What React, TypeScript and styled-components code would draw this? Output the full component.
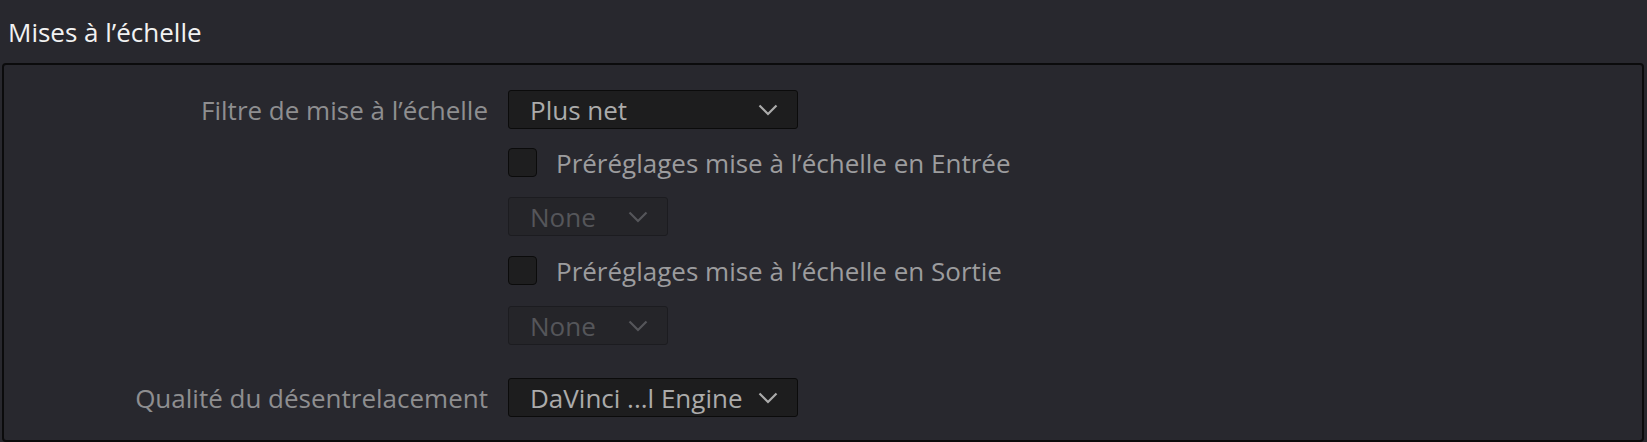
import React from "react";
import styled, { createGlobalStyle } from "styled-components";

const GlobalStyle = createGlobalStyle`
  html, body {
    margin: 0;
    padding: 0;
    background: #28282e;
  }
  body {
    font-family: "Open Sans", "Noto Sans", sans-serif;
    width: 1647px;
    height: 442px;
    overflow: hidden;
  }
`;

const Page = styled.div`
  width: 1647px;
  height: 442px;
  background: #28282e;
  display: flex;
  flex-direction: column;
  box-sizing: border-box;
  padding: 0 3px 0 2px;
`;

const Title = styled.h2`
  margin: 0;
  height: 63px;
  display: flex;
  align-items: center;
  padding: 0 0 0 6px;
  font-size: 26px;
  font-weight: 400;
  color: #f2f2f2;
`;

const Panel = styled.section`
  flex: 1;
  border: 2px solid #0b0b0c;
  border-radius: 4px;
  background: #28282e;
  padding: 25px 0 0 0;
  display: grid;
  grid-template-columns: 484px 1fr;
  column-gap: 20px;
  align-content: start;
`;

const Label = styled.div<{ $mt?: number }>`
  grid-column: 1;
  justify-self: end;
  align-self: center;
  margin-top: ${(p) => p.$mt ?? 0}px;
  font-size: 26px;
  color: #8e8e90;
  white-space: nowrap;
`;

const Cell = styled.div<{ $mt?: number }>`
  grid-column: 2;
  display: flex;
  align-items: center;
  height: 39px;
  margin-top: ${(p) => p.$mt ?? 0}px;
`;

const Select = styled.div<{ $width: number; $disabled?: boolean }>`
  box-sizing: border-box;
  width: ${(p) => p.$width}px;
  height: 39px;
  display: flex;
  align-items: center;
  justify-content: space-between;
  padding: 0 19px 0 21px;
  border-radius: 3px;
  border: 1px solid ${(p) => (p.$disabled ? "#1c1c20" : "#0b0b0b")};
  background: ${(p) => (p.$disabled ? "#252529" : "#1d1d1e")};
  color: ${(p) => (p.$disabled ? "#55565a" : "#ababab")};
  font-size: 26px;
  white-space: nowrap;
`;

const Chevron = styled.svg`
  flex: none;
  width: 20px;
  height: 12px;
`;

const CheckRow = styled.label`
  display: flex;
  align-items: center;
  gap: 19px;
  font-size: 26px;
  color: #9c9c9e;
  white-space: nowrap;
`;

const Box = styled.span`
  box-sizing: border-box;
  width: 29px;
  height: 29px;
  border-radius: 4px;
  border: 1px solid #0b0b0b;
  background: #1e1e1f;
`;

const Arrow = () => (
  <Chevron viewBox="0 0 20 12">
    <polyline
      points="1.5,1.5 10,10 18.5,1.5"
      fill="none"
      stroke="currentColor"
      strokeWidth="2.2"
    />
  </Chevron>
);

export default function App() {
  return (
    <>
      <GlobalStyle />
      <Page>
        <Title>Mises à l’échelle</Title>
        <Panel>
          <Label>Filtre de mise à l’échelle</Label>
          <Cell>
            <Select $width={290}>
              <span>Plus net</span>
              <Arrow />
            </Select>
          </Cell>

          <Cell $mt={14}>
            <CheckRow>
              <Box />
              Préréglages mise à l’échelle en Entrée
            </CheckRow>
          </Cell>

          <Cell $mt={15}>
            <Select $width={160} $disabled>
              <span>None</span>
              <Arrow />
            </Select>
          </Cell>

          <Cell $mt={15}>
            <CheckRow>
              <Box />
              Préréglages mise à l’échelle en Sortie
            </CheckRow>
          </Cell>

          <Cell $mt={16}>
            <Select $width={160} $disabled>
              <span>None</span>
              <Arrow />
            </Select>
          </Cell>

          <Label $mt={33}>Qualité du désentrelacement</Label>
          <Cell $mt={33}>
            <Select $width={290}>
              <span>DaVinci ...l Engine</span>
              <Arrow />
            </Select>
          </Cell>
        </Panel>
      </Page>
    </>
  );
}
